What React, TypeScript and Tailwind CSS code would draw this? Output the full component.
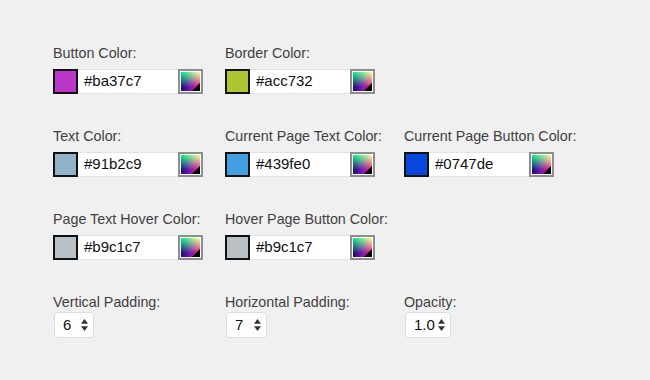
const font = { fontFamily: '"Liberation Sans", Arial, sans-serif' };

type ColorField = { label: string; value: string };

const rows: ColorField[][] = [
  [
    { label: "Button Color:", value: "#ba37c7" },
    { label: "Border Color:", value: "#acc732" },
  ],
  [
    { label: "Text Color:", value: "#91b2c9" },
    { label: "Current Page Text Color:", value: "#439fe0" },
    { label: "Current Page Button Color:", value: "#0747de" },
  ],
  [
    { label: "Page Text Hover Color:", value: "#b9c1c7" },
    { label: "Hover Page Button Color:", value: "#b9c1c7" },
  ],
];

const PickerButton = () => (
  <div className="w-[25px] h-[25px] border-2 border-[#8e8e8e] bg-white p-px">
    <div className="relative w-full h-full bg-[linear-gradient(to_right,#180a7a,#7a1ab0_50%,#ff0f7e)]">
      <div className="absolute inset-0 bg-[linear-gradient(to_right,#00f08a,#7cf590_50%,#f8ff9c)] [mask-image:linear-gradient(to_bottom,black,rgba(0,0,0,0.6)_35%,transparent_80%)]" />
      <svg className="absolute right-0 bottom-0" width="8" height="8" viewBox="0 0 8 8">
        <polygon points="8,0 8,8 0,8" fill="#000" />
      </svg>
    </div>
  </div>
);

const ColorInput = ({ label, value }: ColorField) => (
  <div className="flex flex-col">
    <span className="text-[14.3px] leading-4 text-[#3f3f3f] whitespace-nowrap">{label}</span>
    <div className="flex mt-2 h-[25px]">
      <div className="w-[25px] h-[25px] border-2 border-[#111]" style={{ backgroundColor: value }} />
      <div className="w-[100px] h-[25px] bg-white border-y border-[#e3e3e3] flex items-center pl-[6px] text-[15px] text-[#111]">
        {value}
      </div>
      <PickerButton />
    </div>
  </div>
);

const Spinner = ({ value, width }: { value: string; width: string }) => (
  <div
    className={`${width} h-[26px] mt-[2px] ml-[1px] bg-white border border-[#dcdcdc] rounded-[4px] flex items-center justify-between pl-[8px] pr-[5px] text-[15px] text-[#111]`}
  >
    <span>{value}</span>
    <svg width="7" height="12" viewBox="0 0 7 12">
      <polygon points="3.5,0 7,4.8 0,4.8" fill="#333" />
      <polygon points="0,7.2 7,7.2 3.5,12" fill="#333" />
    </svg>
  </div>
);

export default function App() {
  return (
    <div className="w-[650px] h-[380px] bg-[#f0f0f0] pt-[45px] pl-[53px]" style={font}>
      <div className="flex flex-col gap-[34px]">
        {rows.map((row, i) => (
          <div key={i} className="grid grid-cols-[172px_179px_auto]">
            {row.map((f) => (
              <ColorInput key={f.label} {...f} />
            ))}
          </div>
        ))}
        <div className="grid grid-cols-[172px_179px_auto]">
          <div className="flex flex-col">
            <span className="text-[14.3px] leading-4 text-[#3f3f3f]">Vertical Padding:</span>
            <Spinner value="6" width="w-[40px]" />
          </div>
          <div className="flex flex-col">
            <span className="text-[14.3px] leading-4 text-[#3f3f3f]">Horizontal Padding:</span>
            <Spinner value="7" width="w-[41px]" />
          </div>
          <div className="flex flex-col">
            <span className="text-[14.3px] leading-4 text-[#3f3f3f]">Opacity:</span>
            <Spinner value="1.0" width="w-[46px]" />
          </div>
        </div>
      </div>
    </div>
  );
}
